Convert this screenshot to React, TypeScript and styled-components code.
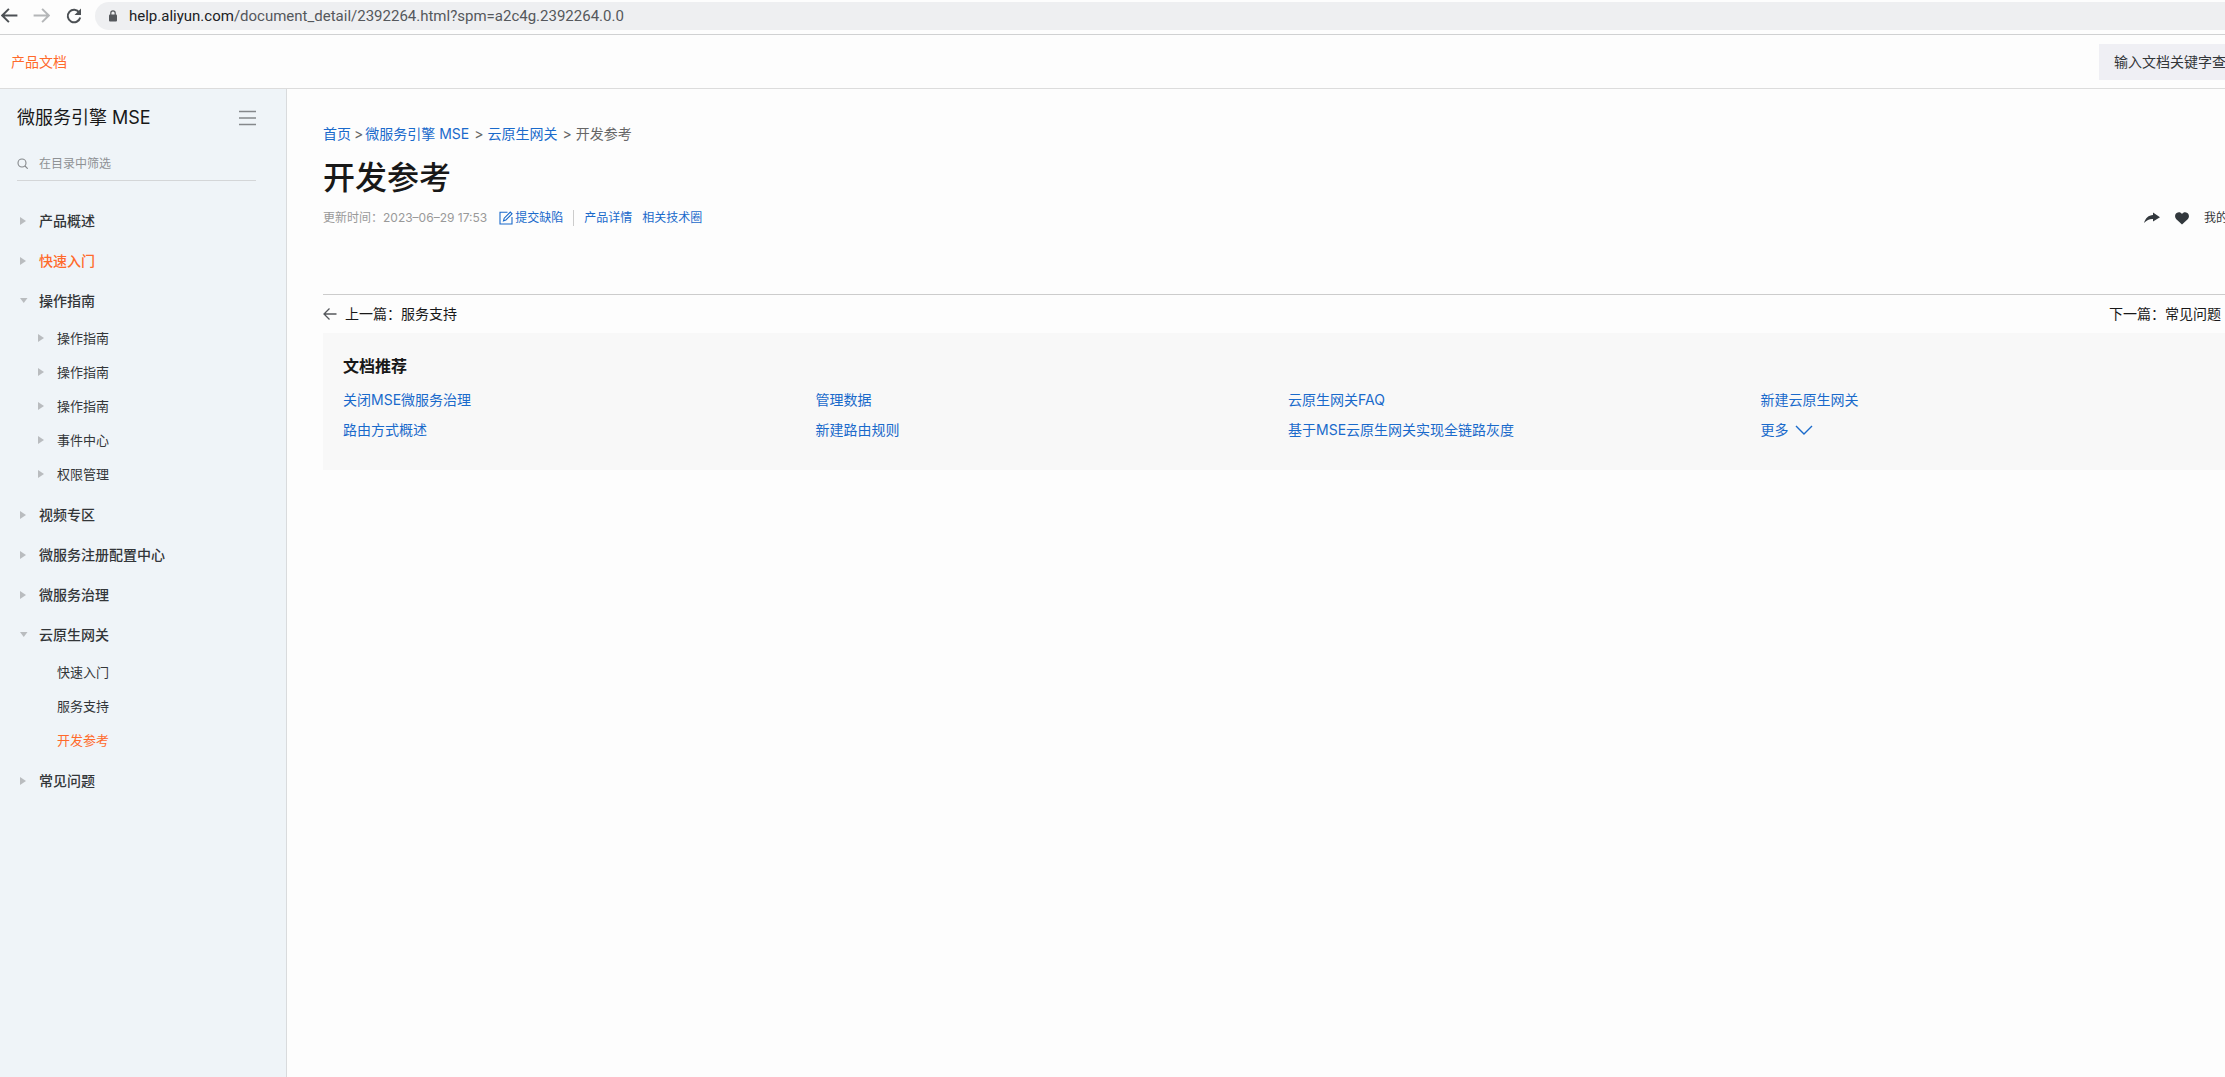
import React from "react";
import styled, { createGlobalStyle } from "styled-components";

const color = {
  link: "#1a6acb",
  accent: "#ff6a2b",
  ink: "#181818",
  text: "#333639",
  muted: "#999999",
  line: "#cccccc",
  side: "#eff4f8",
};

const GlobalStyle = createGlobalStyle`
  *, *::before, *::after { box-sizing: border-box; }
  body {
    margin: 0;
    background: #fdfdfd;
    color: ${color.ink};
    font: 14px/20px Inter, "Noto Sans CJK SC", sans-serif;
    overflow-x: hidden;
  }
  a { color: inherit; text-decoration: none; }
  ul { list-style: none; margin: 0; padding: 0; }
  button { font: inherit; color: inherit; background: none; border: 0; padding: 0; cursor: pointer; }
  svg { display: block; flex: none; }
`;

const Page = styled.div`
  width: calc(100% + 64px);
  min-height: 100vh;
  display: flex;
  flex-direction: column;
`;

const BrowserBar = styled.div`
  display: flex;
  align-items: center;
  height: 35px;
  padding-bottom: 3px;
  border-bottom: 1px solid #d0d1d2;
`;

const BrowserButtons = styled.div`
  display: flex;
  gap: 15px;
  width: 95px;
  padding-left: 1px;
`;

const AddressBar = styled.div`
  display: flex;
  align-items: center;
  gap: 11px;
  flex: 1;
  height: 28px;
  padding-left: 13px;
  border-radius: 14px 0 0 14px;
  background: #eeeff1;
`;

const Address = styled.div`
  font: 15px/24px Roboto, sans-serif;
  color: #55585c;
`;

const Host = styled.span`
  color: #202124;
`;

const Header = styled.header`
  display: flex;
  align-items: center;
  justify-content: space-between;
  height: 54px;
  padding: 0 30px 0 11px;
  border-bottom: 1px solid #dcdcdc;
`;

const ProductLink = styled.a`
  color: ${color.accent};
`;

const HeaderSearch = styled.input`
  width: 160px;
  height: 36px;
  padding: 0 15px;
  border: 0;
  background: #efeff4;
  font: inherit;
  &::placeholder { color: ${color.text}; opacity: 1; }
`;

const Body = styled.div`
  display: flex;
  flex: 1;
`;

const Sidebar = styled.aside`
  width: 287px;
  padding: 17px 30px 24px 17px;
  border-right: 1px solid #d9dbdd;
  background: ${color.side};
`;

const SidebarHead = styled.div`
  display: flex;
  align-items: center;
  justify-content: space-between;
  height: 24px;
`;

const SidebarTitle = styled.h2`
  margin: 0;
  font-size: 18px;
  line-height: 24px;
  font-weight: 400;
`;

const Filter = styled.label`
  display: flex;
  align-items: center;
  gap: 11px;
  height: 34px;
  margin: 17px 0 20px;
  border-bottom: 1px solid #d4d6d8;
`;

const FilterInput = styled.input`
  flex: 1;
  min-width: 0;
  padding: 0;
  border: 0;
  background: none;
  font: inherit;
  font-size: 12px;
  &::placeholder { color: #8e9194; opacity: 1; }
`;

const Entry = styled.a<{ $active?: boolean }>`
  display: flex;
  align-items: center;
  height: 40px;
  padding-left: 3px;
  font-weight: 500;
  color: ${(p) => (p.$active ? color.accent : color.text)};
`;

const SubEntry = styled(Entry)`
  height: 34px;
  padding-left: 21px;
  font-size: 13px;
  font-weight: 400;
`;

const SubList = styled.ul`
  padding-bottom: 4px;
`;

const CaretSlot = styled.span`
  width: 19px;
`;

const Main = styled.main`
  flex: 1;
  min-width: 0;
  padding: 35px 36px;
`;

const Breadcrumb = styled.nav`
  display: flex;
  color: #666666;
`;

const Crumb = styled.a`
  color: ${color.link};
`;

const Separator = styled.span<{ $wide?: boolean }>`
  margin: 0 ${(p) => (p.$wide ? 4 : 2)}px 0 ${(p) => (p.$wide ? 5 : 3)}px;
`;

const Title = styled.h1`
  margin: 14px 0 10px;
  font-size: 32px;
  line-height: 40px;
  font-weight: 500;
`;

const Meta = styled.div`
  display: flex;
  align-items: center;
  height: 20px;
  font-size: 12px;
  color: ${color.muted};
`;

const MetaLink = styled.a<{ $first?: boolean }>`
  display: flex;
  align-items: center;
  gap: 2px;
  margin-left: ${(p) => (p.$first ? 12 : 10)}px;
  color: ${color.link};
`;

const Divider = styled.span`
  width: 1px;
  height: 16px;
  margin-left: 10px;
  background: ${color.line};
`;

const Actions = styled.div`
  display: flex;
  align-items: center;
  gap: 15px;
  margin-left: auto;
  color: ${color.text};
`;

const MineLink = styled.a`
  width: 49px;
`;

const Pager = styled.nav`
  display: flex;
  justify-content: space-between;
  height: 39px;
  margin-top: 66px;
  padding-right: 10px;
  border-top: 1px solid ${color.line};
`;

const PagerLink = styled.a`
  display: flex;
  align-items: center;
  gap: 8px;
`;

const Recommend = styled.section`
  padding: 21px 20px 25px;
  background: #f8f8f8;
`;

const RecommendTitle = styled.h3`
  margin: 0 0 7px;
  font-size: 16px;
  line-height: 24px;
  font-weight: 600;
`;

const LinkGrid = styled.ul`
  display: grid;
  grid-template-columns: repeat(4, 1fr);
  line-height: 30px;
  color: ${color.link};
`;

const MoreButton = styled.button`
  display: flex;
  align-items: center;
  gap: 6px;
  height: 30px;
`;

const Caret = ({ open }: { open?: boolean }) => (
  <svg width="8" height="10" viewBox="0 0 8 10" fill="#b9bcbf" aria-hidden="true">
    {open ? <path d="M0 2h7.500L3.750 7z" /> : <path d="M0 1v8L6 5z" />}
  </svg>
);

const Arrow = ({ flip, size = 14, stroke, width = 1.3 }: { flip?: boolean; size?: number; stroke: string; width?: number }) => (
  <svg width={size} height={size} viewBox="0 0 14 14" fill="none" stroke={stroke} strokeWidth={width} aria-hidden="true">
    {flip ? <path d="M0.500 7h12M7.500 1.500 13 7l-5.500 5.500" /> : <path d="M13.500 7h-12M6.500 1.500 1 7l5.500 5.500" />}
  </svg>
);

type TreeNode = { label: string; active?: boolean; leaf?: boolean; children?: TreeNode[] };

const tree: TreeNode[] = [
  { label: "产品概述" },
  { label: "快速入门", active: true },
  {
    label: "操作指南",
    children: [
      { label: "操作指南" },
      { label: "操作指南" },
      { label: "操作指南" },
      { label: "事件中心" },
      { label: "权限管理" },
    ],
  },
  { label: "视频专区" },
  { label: "微服务注册配置中心" },
  { label: "微服务治理" },
  {
    label: "云原生网关",
    children: [
      { label: "快速入门", leaf: true },
      { label: "服务支持", leaf: true },
      { label: "开发参考", leaf: true, active: true },
    ],
  },
  { label: "常见问题" },
];

const recommended = [
  "关闭MSE微服务治理",
  "管理数据",
  "云原生网关FAQ",
  "新建云原生网关",
  "路由方式概述",
  "新建路由规则",
  "基于MSE云原生网关实现全链路灰度",
];

export default function App() {
  return (
    <>
      <GlobalStyle />
      <Page>
        <BrowserBar>
          <BrowserButtons>
            <button aria-label="后退"><Arrow size={17} stroke="#4c5054" width={1.6} /></button>
            <button aria-label="前进"><Arrow flip size={17} stroke="#b4b6b8" width={1.6} /></button>
            <button aria-label="刷新">
              <svg width="18" height="18" viewBox="0 0 18 18" fill="none" stroke="#4c5054" strokeWidth="2">
                <path d="M14.300 5.500A6.300 6.300 0 1 0 15.200 10.500" />
                <path d="M16 1.500v6.500H9.500z" fill="#4c5054" stroke="none" />
              </svg>
            </button>
          </BrowserButtons>
          <AddressBar>
            <svg width="10" height="12" viewBox="0 0 10 12" aria-hidden="true">
              <rect x="1" y="4.500" width="8" height="7" rx="1" fill="#55585c" />
              <path d="M2.800 5V3a2.200 2.200 0 0 1 4.400 0v2" fill="none" stroke="#55585c" strokeWidth="1.200" />
            </svg>
            <Address>
              <Host>help.aliyun.com</Host>/document_detail/2392264.html?spm=a2c4g.2392264.0.0
            </Address>
          </AddressBar>
        </BrowserBar>

        <Header>
          <ProductLink href="#docs">产品文档</ProductLink>
          <HeaderSearch type="search" aria-label="搜索文档" placeholder="输入文档关键字查" />
        </Header>

        <Body>
          <Sidebar>
            <SidebarHead>
              <SidebarTitle>微服务引擎 MSE</SidebarTitle>
              <button aria-label="收起目录">
                <svg width="17" height="16" viewBox="0 0 17 16" stroke="#85888b" strokeWidth="1.500">
                  <path d="M0 1.500h17M0 8h17M0 14.500h17" />
                </svg>
              </button>
            </SidebarHead>
            <Filter>
              <svg width="11" height="11" viewBox="0 0 11 11" fill="none" stroke="#85888b" strokeWidth="1.100" aria-hidden="true">
                <circle cx="5" cy="5" r="4" />
                <path d="m8 8 2.700 2.700" />
              </svg>
              <FilterInput aria-label="在目录中筛选" placeholder="在目录中筛选" />
            </Filter>
            <ul>
              {tree.map((node) => (
                <li key={node.label}>
                  <Entry href="#doc" $active={node.active}>
                    <CaretSlot><Caret open={!!node.children} /></CaretSlot>
                    {node.label}
                  </Entry>
                  {node.children && (
                    <SubList>
                      {node.children.map((child, i) => (
                        <li key={i}>
                          <SubEntry href="#doc" $active={child.active}>
                            <CaretSlot>{!child.leaf && <Caret />}</CaretSlot>
                            {child.label}
                          </SubEntry>
                        </li>
                      ))}
                    </SubList>
                  )}
                </li>
              ))}
            </ul>
          </Sidebar>

          <Main>
            <Breadcrumb>
              <Crumb href="#home">首页</Crumb>
              <Separator>&gt;</Separator>
              <Crumb href="#mse">微服务引擎 MSE</Crumb>
              <Separator $wide>&gt;</Separator>
              <Crumb href="#gateway">云原生网关</Crumb>
              <Separator $wide>&gt;</Separator>
              <span>开发参考</span>
            </Breadcrumb>
            <Title>开发参考</Title>
            <Meta>
              <span>更新时间：2023–06–29 17:53</span>
              <MetaLink href="#feedback" $first>
                <svg width="14" height="14" viewBox="0 0 14 14" fill="none" stroke={color.link} strokeWidth="1.100" aria-hidden="true">
                  <path d="M8.500 1.200H1v11.800h12V6" />
                  <path d="M4.500 9.800 5.200 7.200 11.300 1.100l1.700 1.700-6.100 6.200z" />
                </svg>
                提交缺陷
              </MetaLink>
              <Divider />
              <MetaLink href="#detail">产品详情</MetaLink>
              <MetaLink href="#community">相关技术圈</MetaLink>
              <Actions>
                <button aria-label="分享">
                  <svg width="16" height="12" viewBox="0 0 16 12" fill="#32383d">
                    <path d="M0 11C1.500 6 4.500 3.300 9 3V0.500L16 5.200 9 9.500V7C5.500 6.800 3 8 0 11z" />
                  </svg>
                </button>
                <button aria-label="收藏">
                  <svg width="14" height="13" viewBox="0 0 14 13" fill="#32383d">
                    <path d="M7 12.500 1.300 7.300C-.6 5.300-.2 2.200 1.700 1 3.500-.1 5.800.2 7 2 8.200.2 10.500-.1 12.300 1c1.900 1.200 2.300 4.300.4 6.300z" />
                  </svg>
                </button>
                <MineLink href="#mine">我的</MineLink>
              </Actions>
            </Meta>
            <Pager>
              <PagerLink href="#prev"><Arrow stroke="#55585c" />上一篇：服务支持</PagerLink>
              <PagerLink href="#next">下一篇：常见问题<Arrow flip stroke="#55585c" /></PagerLink>
            </Pager>
            <Recommend>
              <RecommendTitle>文档推荐</RecommendTitle>
              <LinkGrid>
                {recommended.map((label) => (
                  <li key={label}><a href="#doc">{label}</a></li>
                ))}
                <li>
                  <MoreButton>
                    更多
                    <svg width="18" height="10" viewBox="0 0 18 10" fill="none" stroke={color.link} strokeWidth="1.400" aria-hidden="true">
                      <path d="m1 1 8 8 8-8" />
                    </svg>
                  </MoreButton>
                </li>
              </LinkGrid>
            </Recommend>
          </Main>
        </Body>
      </Page>
    </>
  );
}
